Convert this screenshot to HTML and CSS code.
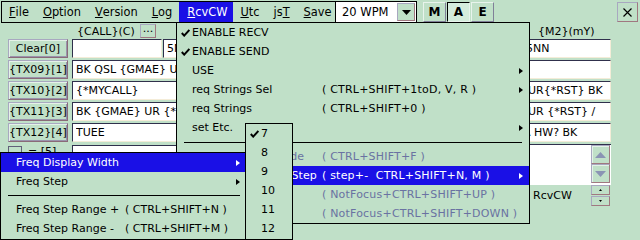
FILE: index.html
```html
<!DOCTYPE html>
<html>
<head>
  <meta name="viewport" content="width=device-width, initial-scale=1">
  <link rel="stylesheet" href="styles.css">
</head>
<body>

<div class="window">
  <div class="topbar">
    <div class="menubar">
      <span class="menu-item"><u>F</u>ile</span>
      <span class="menu-item"><u>O</u>ption</span>
      <span class="menu-item"><u>V</u>ersion</span>
      <span class="menu-item"><u>L</u>og</span>
      <span class="menu-item active"><u>R</u>cvCW</span>
      <span class="menu-item"><u>U</u>tc</span>
      <span class="menu-item">js<u>T</u></span>
      <span class="menu-item"><u>S</u>ave</span>
    </div>
    <div class="combo">
      <span class="combo-text">20 WPM</span>
      <span class="combo-btn">
        <svg width="9" height="5" viewBox="0 0 9 5"><polygon points="0,0 9,0 4.5,5" fill="#000"/></svg>
      </span>
    </div>
    <div class="mode-btns">
      <span class="mode-btn">M</span>
      <span class="mode-btn pressed">A</span>
      <span class="mode-btn">E</span>
    </div>
    <span class="close-btn">
      <svg width="9" height="9" viewBox="0 0 9 9"><path d="M0.5 0.5 L8.5 8.5 M8.5 0.5 L0.5 8.5" stroke="#000" stroke-width="1.2"/></svg>
    </span>
  </div>

  <div class="form">
    <div class="label-row">
      <span class="btn-space"></span>
      <span class="main-label">
        <span class="call-label">{CALL}(C)</span>
        <span class="dots-btn">...</span>
      </span>
      <span class="side-label">{M2}(mY)</span>
    </div>

    <div class="row">
      <span class="btn">Clear[0]</span>
      <span class="input call"></span>
      <span class="input rst"><span class="val">5N</span></span>
      <span class="input side cut1">5NN</span>
    </div>
    <div class="row">
      <span class="btn">{TX09}[1]</span>
      <span class="input main"><span class="val">BK QSL {GMAE} U</span></span>
      <span class="input side"></span>
    </div>
    <div class="row">
      <span class="btn">{TX10}[2]</span>
      <span class="input main"><span class="val">{*MYCALL}</span></span>
      <span class="input side">UR{*RST} BK</span>
    </div>
    <div class="row">
      <span class="btn">{TX11}[3]</span>
      <span class="input main"><span class="val">BK {GMAE} UR {*R</span></span>
      <span class="input side">UR {*RST} /</span>
    </div>
    <div class="row">
      <span class="btn">{TX12}[4]</span>
      <span class="input main"><span class="val">TUEE</span></span>
      <span class="input side cut2">A HW? BK</span>
    </div>

    <div class="lower">
      <div class="lower-left">
        <div class="row">
          <span class="check-box"></span>
          <span class="check-text">= [5]</span>
          <span class="input main"></span>
        </div>
      </div>
      <div class="lower-right">
        <div class="memo">
          <span class="memo-text"></span>
          <span class="scroll">
            <span class="scroll-btn"><svg width="11" height="6" viewBox="0 0 11 6"><polygon points="0,6 11,6 5.5,0" fill="#8a94b4"/></svg></span>
            <span class="scroll-btn"><svg width="11" height="6" viewBox="0 0 11 6"><polygon points="0,0 11,0 5.5,6" fill="#8a94b4"/></svg></span>
          </span>
        </div>
        <div class="status">
          <span class="status-label">RcvCW</span>
          <span class="spin">
            <span class="spin-btn"><svg width="3" height="2" viewBox="0 0 3 2"><polygon points="0,2 3,2 1.5,0" fill="#000"/></svg></span>
            <span class="spin-btn"><svg width="3" height="2" viewBox="0 0 3 2"><polygon points="0,0 3,0 1.5,2" fill="#000"/></svg></span>
          </span>
        </div>
      </div>
    </div>
  </div>
</div>

<!-- RcvCW dropdown -->
<div class="popup rcv-menu">
  <div class="item"><span class="chk"><svg width="9" height="8" viewBox="0 0 9 8"><path d="M0.8 4 L3.2 6.6 L8.4 1" fill="none" stroke="#000" stroke-width="2"/></svg></span><span class="label">ENABLE RECV</span></div>
  <div class="item"><span class="chk"><svg width="9" height="8" viewBox="0 0 9 8"><path d="M0.8 4 L3.2 6.6 L8.4 1" fill="none" stroke="#000" stroke-width="2"/></svg></span><span class="label">ENABLE SEND</span></div>
  <div class="item"><span class="chk"></span><span class="label">USE</span><span class="keys"></span><span class="arrow"></span></div>
  <div class="item"><span class="chk"></span><span class="label">req Strings Sel</span><span class="keys">( CTRL+SHIFT+1toD, V, R )</span><span class="arrow"></span></div>
  <div class="item"><span class="chk"></span><span class="label">req Strings</span><span class="keys">( CTRL+SHIFT+0 )</span></div>
  <div class="item"><span class="chk"></span><span class="label">set Etc.</span><span class="keys"></span><span class="arrow"></span></div>
  <div class="sep"></div>
  <div class="item gray"><span class="chk"></span><span class="label">Freq Readouts Mode</span><span class="keys">( CTRL+SHIFT+F )</span></div>
  <div class="item hot"><span class="chk"></span><span class="label">Mouse Up / Down Step</span><span class="keys">( step+-&nbsp; CTRL+SHIFT+N, M )</span><span class="arrow"></span></div>
  <div class="item gray"><span class="chk"></span><span class="label"></span><span class="keys">( NotFocus+CTRL+SHIFT+UP )</span></div>
  <div class="item gray"><span class="chk"></span><span class="label"></span><span class="keys">( NotFocus+CTRL+SHIFT+DOWN )</span></div>
</div>

<!-- Freq submenu -->
<div class="popup freq-menu">
  <div class="item hot"><span class="label">Freq Display Width</span><span class="keys"></span><span class="arrow"></span></div>
  <div class="item"><span class="label">Freq Step</span><span class="keys"></span><span class="arrow"></span></div>
  <div class="sep"></div>
  <div class="item"><span class="label">Freq Step Range +</span><span class="keys">( CTRL+SHIFT+N )</span></div>
  <div class="item"><span class="label">Freq Step Range -</span><span class="keys">( CTRL+SHIFT+M )</span></div>
</div>

<!-- Width submenu -->
<div class="popup width-menu">
  <div class="item"><span class="chk"><svg width="9" height="8" viewBox="0 0 9 8"><path d="M0.8 4 L3.2 6.6 L8.4 1" fill="none" stroke="#000" stroke-width="2"/></svg></span><span class="label">7</span></div>
  <div class="item"><span class="chk"></span><span class="label">8</span></div>
  <div class="item"><span class="chk"></span><span class="label">9</span></div>
  <div class="item"><span class="chk"></span><span class="label">10</span></div>
  <div class="item"><span class="chk"></span><span class="label">11</span></div>
  <div class="item"><span class="chk"></span><span class="label">12</span></div>
</div>

</body>
</html>
```

FILE: styles.css
```css
body {
  margin: 0;
  width: 640px;
  height: 240px;
  overflow: hidden;
  position: relative;
  background-color: #c0e0c8;
  font-family: "DejaVu Sans", sans-serif;
  font-size: 11px;
  color: #000;
}

/* top bar */
.topbar {
  display: flex;
  align-items: flex-start;
  padding-top: 1px;
  height: 22px;
}

.menubar {
  display: flex;
  height: 20px;
  width: 333px;
  margin-left: 1px;
  border: 1px solid #000;
  border-right: none;
}

.menu-item {
  display: flex;
  align-items: center;
  padding: 0 7px;
  line-height: 20px;
  font-size: 11.4px;
}

.menu-item.active {
  background-color: #1a10e6;
  color: #fff;
  padding: 0 6px 0 8px;
}

.combo {
  display: flex;
  align-items: center;
  width: 80px;
  height: 20px;
  border: 1px solid #000;
  background-color: #fff;
}

.combo-text {
  flex: 1;
  padding-left: 6px;
  font-size: 11.5px;
}

.combo-btn {
  display: flex;
  align-items: center;
  justify-content: center;
  width: 16px;
  height: 16px;
  margin-right: 1px;
  background-color: #c0e0c8;
  border: 1px solid;
  border-color: #a8a8c0 #a07880 #a07880 #a8a8c0;
}

.mode-btns {
  display: flex;
  gap: 1px;
  margin-left: 6px;
  margin-top: 1px;
}

.mode-btn {
  width: 21px;
  height: 18px;
  border: 1px solid;
  border-color: #e8f4ec #808098 #808098 #e8f4ec;
  display: flex;
  align-items: center;
  justify-content: center;
  font-weight: bold;
  font-size: 12px;
}

.mode-btn.pressed {
  border-color: #000 #e8f4ec #e8f4ec #000;
  background-color: #d4ecdc;
  background-image: radial-gradient(#b4d4bc 0.6px, transparent 0.7px);
  background-size: 2px 2px;
}

.close-btn {
  margin-left: auto;
  margin-right: 2px;
  margin-top: 1px;
  width: 19px;
  height: 18px;
  border: 1px solid;
  border-color: #a8a8c0 #a07880 #a07880 #a8a8c0;
  display: flex;
  align-items: center;
  justify-content: center;
}

/* main form */
.form {
  padding-left: 8px;
}

.label-row {
  display: flex;
  align-items: center;
  height: 16px;
}

.btn-space {
  width: 64px;
  flex-shrink: 0;
}

.main-label {
  display: flex;
  align-items: center;
  width: 451px;
  flex-shrink: 0;
}

.call-label {
  margin-left: 5px;
  width: 63px;
}

.dots-btn {
  width: 14px;
  height: 12px;
  border: 1px solid;
  border-color: #a8a8c0 #a07880 #a07880 #a8a8c0;
  font-size: 11px;
  line-height: 8px;
  text-align: center;
}

.side-label {
  width: 73px;
  padding-left: 15px;
  white-space: nowrap;
}

.row {
  display: flex;
  height: 19px;
  margin-bottom: 2px;
}

.btn {
  width: 58px;
  height: 17px;
  margin-right: 4px;
  border: 1px solid;
  border-color: #a8a8c0 #8a6a78 #8a6a78 #a8a8c0;
  box-shadow: inset 1px 1px 0 #e4f2e8, inset -1px -1px 0 #9a94ac;
  display: flex;
  align-items: center;
  justify-content: center;
  white-space: nowrap;
}

.input {
  height: 17px;
  background-color: #fff;
  border: 1px solid;
  border-color: #30304c #f4ecd8 #f4ecd8 #30304c;
  padding-left: 3px;
  display: flex;
  align-items: center;
  white-space: nowrap;
  overflow: hidden;
  flex-shrink: 0;
}

.val {
  max-width: 101px;
  overflow: hidden;
}

.input.main {
  width: 445px;
}

.input.call {
  width: 85px;
}

.input.rst {
  width: 354px;
  margin-left: 1px;
}

.input.side {
  width: 82px;
  margin-left: 1px;
  padding-left: 4px;
}

.input.cut1 {
  padding-left: 2px;
  width: 84px;
}

.input.cut2 {
  padding-left: 0;
  width: 86px;
  text-indent: -1px;
}

/* lower area */
.lower {
  display: flex;
}

.lower-left {
  padding-top: 1px;
}

.check-box {
  width: 12px;
  height: 12px;
  margin-top: 1px;
  border: 1px solid #606078;
}

.check-text {
  width: 44px;
  padding-left: 6px;
}

.lower-right {
  margin-left: 1px;
}

.memo {
  display: flex;
  width: 88px;
  height: 40px;
  background-color: #fff;
  border-top: 1px solid #30304c;
}

.memo-text {
  flex: 1;
}

.scroll {
  display: flex;
  flex-direction: column;
  margin-right: 1px;
}

.scroll-btn {
  width: 17px;
  height: 17px;
  background-color: #c0e0c8;
  border: 1px solid;
  border-color: #a8a8c0 #a07880 #a07880 #a8a8c0;
  box-shadow: inset 1px 1px 0 #e4f2e8;
  display: flex;
  align-items: center;
  justify-content: center;
}

.status {
  display: flex;
  align-items: flex-start;
  height: 22px;
}

.status-label {
  width: 58px;
  padding-left: 10px;
  padding-top: 4px;
}

.spin {
  display: flex;
  flex-direction: column;
  gap: 1px;
}

.spin-btn {
  width: 17px;
  height: 8px;
  border: 1px solid;
  border-color: #a8a8c0 #a07880 #a07880 #a8a8c0;
  display: flex;
  align-items: center;
  justify-content: center;
}

/* popup menus */
.popup {
  position: absolute;
  background-color: #c0e0c8;
  border: 1px solid #000;
}

.popup .item {
  display: flex;
  align-items: center;
  height: 19px;
  white-space: nowrap;
}

.popup .item.hot {
  background-color: #1a10e6;
  color: #fff;
}

.popup .item.gray {
  color: #6a72a2;
}

.popup .chk {
  display: flex;
  align-items: center;
  flex-shrink: 0;
}

.popup .label {
  flex-shrink: 0;
}

.popup .keys {
  flex: 1;
}

.popup .arrow {
  width: 0;
  height: 0;
  border-top: 3.5px solid transparent;
  border-bottom: 3.5px solid transparent;
  border-left: 4px solid #000;
}

.popup .item.hot .arrow {
  border-left-color: #fff;
}

.popup .sep {
  height: 10px;
  display: flex;
  align-items: center;
}

.popup .sep::before {
  content: "";
  flex: 1;
  border-top: 1px solid #000;
}

.rcv-menu {
  left: 176px;
  top: 22px;
  width: 352px;
  height: 200px;
}

.rcv-menu .chk {
  width: 11px;
  padding-left: 4px;
}

.rcv-menu .label {
  width: 130px;
}

.rcv-menu .keys {
  letter-spacing: 0.2px;
}

.rcv-menu .arrow {
  margin-right: 6px;
}

.rcv-menu .sep {
  padding: 0 7px;
}

.freq-menu {
  left: 0;
  top: 152px;
  width: 244px;
  height: 86px;
}

.freq-menu .label {
  width: 109px;
  padding-left: 15px;
}

.freq-menu .arrow {
  margin-right: 5px;
}

.freq-menu .sep {
  height: 9px;
  padding-left: 7px;
  padding-right: 5px;
}

.width-menu {
  left: 245px;
  top: 123px;
  width: 46px;
  height: 115px;
}

.width-menu .chk {
  width: 11px;
  padding-left: 4px;
}
```
